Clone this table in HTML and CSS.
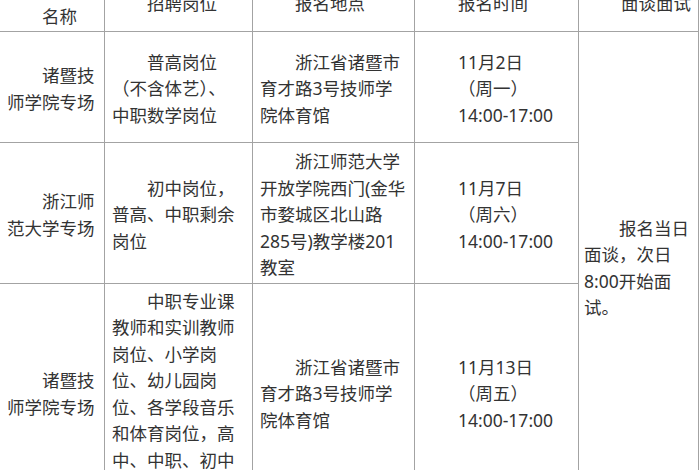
FILE: index.html
```html
<!DOCTYPE html>
<html lang="zh-CN">
<head>
<meta charset="utf-8">
<title>招聘专场安排</title>
<link rel="stylesheet" href="styles.css">
</head>
<body>
<table class="sched">
  <colgroup>
    <col class="c-name">
    <col class="c-post">
    <col class="c-place">
    <col class="c-time">
    <col class="c-talk">
  </colgroup>
  <thead>
    <tr class="r-head">
      <th><div>专场</div><div>名称</div></th>
      <th>招聘岗位</th>
      <th>报名地点</th>
      <th class="time">报名时间</th>
      <th>面谈面试</th>
    </tr>
  </thead>
  <tbody>
    <tr class="r-1">
      <td>诸暨技<br>师学院专场</td>
      <td>普高岗位<br>（不含体艺）、<br>中职数学岗位</td>
      <td>浙江省诸暨市<br>育才路3号技师学<br>院体育馆</td>
      <td class="time">11月2日<br>（周一）<br>14:00-17:00</td>
      <td rowspan="3">报名当日<br>面谈，次日<br>8:00开始面<br>试。</td>
    </tr>
    <tr class="r-2">
      <td>浙江师<br>范大学专场</td>
      <td>初中岗位，<br>普高、中职剩余<br>岗位</td>
      <td>浙江师范大学<br>开放学院西门(金华<br>市婺城区北山路<br>285号)教学楼201<br>教室</td>
      <td class="time">11月7日<br>（周六）<br>14:00-17:00</td>
    </tr>
    <tr class="r-3">
      <td>诸暨技<br>师学院专场</td>
      <td>中职专业课<br>教师和实训教师<br>岗位、小学岗<br>位、幼儿园岗<br>位、各学段音乐<br>和体育岗位，高<br>中、中职、初中<br>剩余岗位</td>
      <td>浙江省诸暨市<br>育才路3号技师学<br>院体育馆</td>
      <td class="time">11月13日<br>（周五）<br>14:00-17:00</td>
    </tr>
  </tbody>
</table>
</body>
</html>
```

FILE: styles.css
```css
html, body {
  margin: 0;
  padding: 0;
  background: #ffffff;
}

body {
  width: 700px;
  height: 470px;
  overflow: hidden;
  font-family: "Noto Sans", "Noto Sans CJK SC", sans-serif;
  font-size: 17.5px;
  line-height: 26.5px;
  color: #333333;
}

.sched {
  border-collapse: collapse;
  table-layout: fixed;
  width: 699px;
  margin: -29px 0 0 -1px;
}

.c-name  { width: 105px; }
.c-post  { width: 148px; }
.c-place { width: 162px; }
.c-time  { width: 164px; }
.c-talk  { width: 120px; }

.sched th,
.sched td {
  border: 1px solid #a3a3a3;
  padding: 3px 6px 0 7px;
  vertical-align: middle;
  text-align: left;
  font-weight: normal;
  text-indent: 2em;
  white-space: nowrap;
}

.sched .time {
  text-indent: 0;
  padding-left: 43px;
}

.sched td[rowspan] {
  padding-left: 5px;
}

.r-head { height: 60px; }
.r-1 { height: 111px; }
.r-2 { height: 141px; }
.r-3 { height: 217px; }
```
